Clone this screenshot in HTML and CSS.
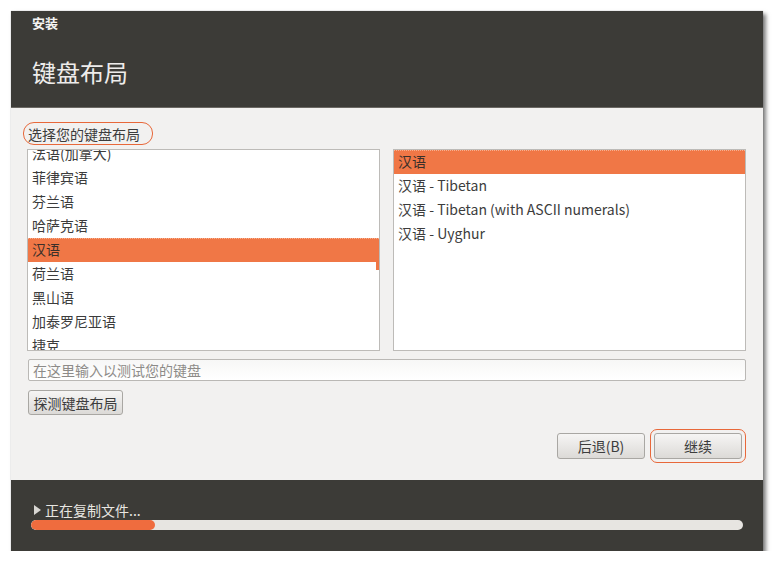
FILE: index.html
```html
<!DOCTYPE html>
<html lang="zh-CN">
<head>
<meta charset="utf-8">
<title>安装 - 键盘布局</title>
<link rel="stylesheet" href="styles.css">
</head>
<body>
<div class="window">
  <header class="header">
    <div class="app-title">安装</div>
    <h1 class="page-title">键盘布局</h1>
  </header>
  <main class="content">
    <div class="label-row">
      <span class="annot annot-label">选择您的键盘布局</span>
    </div>
    <div class="lists">
      <div class="list list-left">
        <div class="list-inner shifted">
          <div class="row">法语(加拿大)</div>
          <div class="row">菲律宾语</div>
          <div class="row">芬兰语</div>
          <div class="row">哈萨克语</div>
          <div class="row selected">汉语</div>
          <div class="row">荷兰语</div>
          <div class="row">黑山语</div>
          <div class="row">加泰罗尼亚语</div>
          <div class="row">捷克</div>
        </div>
        <div class="scroll-mark"></div>
      </div>
      <div class="list list-right">
        <div class="list-inner">
          <div class="row selected">汉语</div>
          <div class="row">汉语 - Tibetan</div>
          <div class="row">汉语 - Tibetan (with ASCII numerals)</div>
          <div class="row">汉语 - Uyghur</div>
        </div>
      </div>
    </div>
    <input class="test-input" type="text" placeholder="在这里输入以测试您的键盘">
    <div class="detect-row">
      <button class="btn btn-detect" type="button">探测键盘布局</button>
    </div>
    <div class="nav-row">
      <button class="btn btn-nav" type="button">后退(B)</button>
      <span class="annot annot-btn"><button class="btn btn-nav" type="button">继续</button></span>
    </div>
  </main>
  <footer class="footer">
    <div class="status"><span class="tri"></span>正在复制文件...</div>
    <div class="progress"><div class="progress-fill" style="width:124px"></div></div>
  </footer>
</div>
</body>
</html>
```

FILE: styles.css
```css
* { box-sizing: border-box; }

html, body {
  margin: 0;
  padding: 0;
  background: #ffffff;
}

body {
  font-family: "Noto Sans CJK SC", "Noto Sans", sans-serif;
  font-size: 14px;
  color: #3c3c3c;
  padding: 11px 0 0 11px;
}

.window {
  width: 752px;
  height: 540px;
  display: flex;
  flex-direction: column;
  background: #f2f1f0;
  box-shadow: 3px 3px 4px rgba(0, 0, 0, 0.5), 0 0 1px rgba(0, 0, 0, 0.3);
}

.header {
  height: 97px;
  background: #3c3b37;
  padding: 3px 0 0 21px;
  color: #f2f1f0;
  border-bottom: 1px solid #6b6863;
}

.app-title {
  font-size: 13px;
  font-weight: bold;
  line-height: 18px;
  color: #f5f4f2;
}

.page-title {
  margin: 25px 0 0 0;
  font-size: 24px;
  font-weight: normal;
  line-height: 30px;
  color: #eeeceb;
}

.content {
  flex: 1;
  display: flex;
  flex-direction: column;
  padding: 14px 17px 0 16px;
}

.label-row {
  display: flex;
  height: 23px;
}

.annot {
  border: 1.5px solid #e8683a;
  border-radius: 11px;
}

.annot-label {
  display: flex;
  align-items: center;
  padding: 0 12px 0 4px;
  margin-left: -4px;
  line-height: 18px;
  color: #3c3c3c;
}

.lists {
  display: flex;
  gap: 13px;
  margin-top: 4px;
  height: 202px;
}

.list {
  position: relative;
  flex: 1;
  background: #ffffff;
  border: 1px solid #bdbbb8;
  overflow: hidden;
}

.list-inner.shifted {
  margin-top: -8px;
}

.row {
  height: 24px;
  line-height: 22px;
  padding: 0 0 2px 4px;
  white-space: nowrap;
  color: #3c3c3c;
}

.row.selected {
  background: #f07746;
  border-top: 1px dotted #f7b091;
  line-height: 21px;
  color: #3a302a;
}

.scroll-mark {
  position: absolute;
  right: 0;
  top: 112px;
  width: 3px;
  height: 8px;
  background: #f07746;
}

.test-input {
  margin: 8px 0 0 1px;
  height: 22px;
  width: 718px;
  border: 1px solid #bab8b5;
  border-radius: 2px;
  background: linear-gradient(#f7f7f6, #ffffff);
  font-family: inherit;
  font-size: 14px;
  padding: 0 4px;
  color: #3c3c3c;
}

.test-input::placeholder {
  color: #8d8b88;
}

.detect-row {
  display: flex;
  margin-top: 9px;
  padding-left: 1px;
}

.btn {
  font-family: inherit;
  font-size: 14px;
  color: #3c3c3c;
  border: 1px solid #a9a7a3;
  border-radius: 3px;
  background: linear-gradient(#f6f5f4, #dcdad7);
  padding: 0;
  margin: 0;
}

.btn-detect {
  height: 25px;
  width: 95px;
  line-height: 22px;
}

.nav-row {
  display: flex;
  justify-content: flex-end;
  align-items: center;
  gap: 5px;
  margin-top: 14px;
  margin-right: 0;
}

.btn-nav {
  width: 88px;
  height: 26px;
  line-height: 23px;
  display: block;
}

.annot-btn {
  display: block;
  padding: 3px;
  border-radius: 7px;
}

.footer {
  height: 71px;
  background: #3c3b37;
  padding: 22px 20px 0 20px;
  color: #e8e6e1;
}

.status {
  display: flex;
  align-items: center;
  height: 16px;
  line-height: 16px;
  font-size: 14px;
  padding-left: 3px;
}

.tri {
  display: inline-block;
  width: 0;
  height: 0;
  border-top: 5px solid transparent;
  border-bottom: 5px solid transparent;
  border-left: 7px solid #d8d6d2;
  margin-right: 4px;
}

.progress {
  margin-top: 2px;
  height: 10px;
  border-radius: 5px;
  background: #e7e5e1;
  overflow: hidden;
}

.progress-fill {
  height: 100%;
  background: #ef6c3e;
  border-radius: 5px;
}
```
